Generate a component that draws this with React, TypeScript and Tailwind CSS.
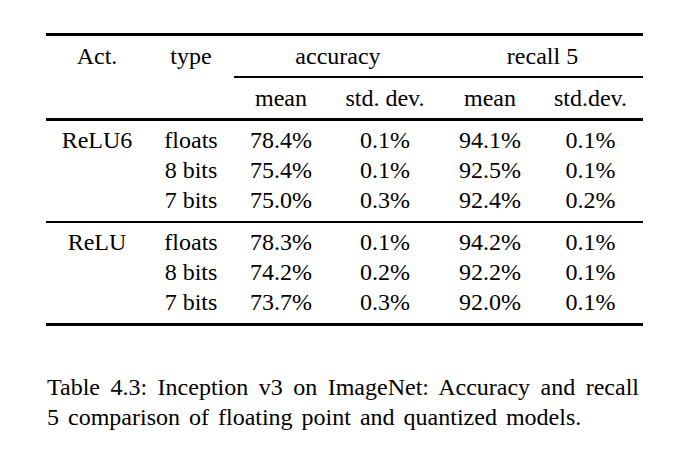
import React from "react";

const cols = "grid grid-cols-[102px_86px_94px_114px_96px_105px] text-center";

const groups = [
  {
    act: "ReLU6",
    rows: [
      ["floats", "78.4%", "0.1%", "94.1%", "0.1%"],
      ["8 bits", "75.4%", "0.1%", "92.5%", "0.1%"],
      ["7 bits", "75.0%", "0.3%", "92.4%", "0.2%"],
    ],
  },
  {
    act: "ReLU",
    rows: [
      ["floats", "78.3%", "0.1%", "94.2%", "0.1%"],
      ["8 bits", "74.2%", "0.2%", "92.2%", "0.1%"],
      ["7 bits", "73.7%", "0.3%", "92.0%", "0.1%"],
    ],
  },
];

function Group({ act, rows }: { act: string; rows: string[][] }) {
  return (
    <div className="pt-[4px] pb-[6px]">
      {rows.map((r, i) => (
        <div key={i} className={`${cols} h-[30px] items-center`}>
          <span>{i === 0 ? act : ""}</span>
          {r.map((c, j) => (
            <span key={j}>{c}</span>
          ))}
        </div>
      ))}
    </div>
  );
}

export default function App() {
  return (
    <div className="w-[678px] h-[466px] bg-white text-black text-[24px] leading-[30px] font-[family-name:Liberation_Serif,Times_New_Roman,serif] pt-[33px] pl-[46px]">
      <div className="w-[597px]">
        <div className="h-[3px] bg-black" />
        <div className={`${cols} h-[40px] items-center`}>
          <span>Act.</span>
          <span>type</span>
          <span className="col-span-2">accuracy</span>
          <span className="col-span-2">recall 5</span>
        </div>
        <div className={cols}>
          <div className="col-start-3 col-span-4 h-[2px] bg-black" />
        </div>
        <div className={`${cols} h-[40px] items-center`}>
          <span />
          <span />
          <span>mean</span>
          <span>std. dev.</span>
          <span>mean</span>
          <span>std.dev.</span>
        </div>
        <div className="h-[3px] bg-black" />
        <Group {...groups[0]} />
        <div className="h-[2px] bg-black" />
        <Group {...groups[1]} />
        <div className="h-[3px] bg-black" />
      </div>
      <p className="mt-[46px] w-[593px] pl-[1px]">
        <span className="block text-justify [text-align-last:justify]">
          Table 4.3: Inception v3 on ImageNet: Accuracy and recall
        </span>
        <span className="block [word-spacing:3px]">5 comparison of floating point and quantized models.</span>
      </p>
    </div>
  );
}
